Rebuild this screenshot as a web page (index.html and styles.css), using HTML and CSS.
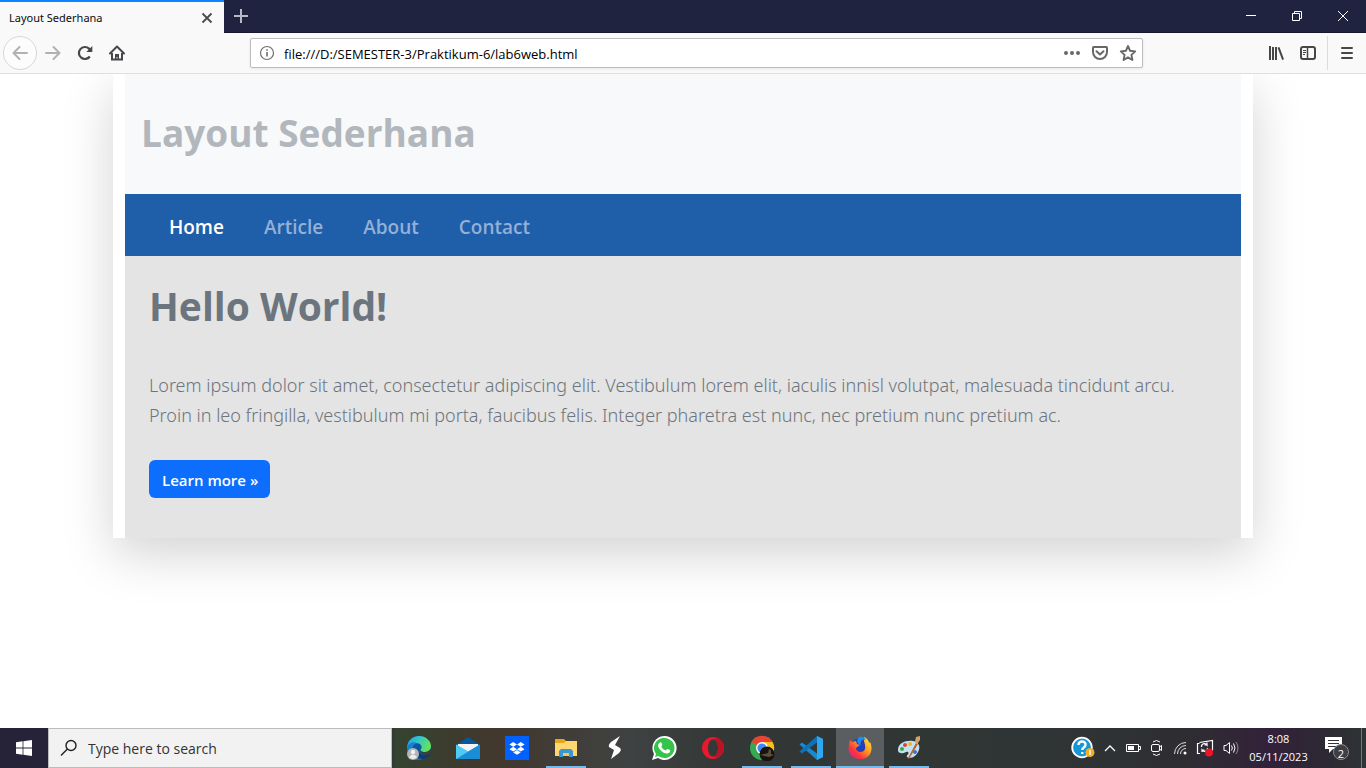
FILE: index.html
```html
<!DOCTYPE html>
<html lang="en">
<head>
<meta charset="utf-8">
<title>Layout Sederhana</title>
<link rel="stylesheet" href="styles.css">
</head>
<body>
<div class="tabs">
  <div class="tab"><span>Layout Sederhana</span>
    <button class="tab-close" aria-label="Close tab"><svg width="12" height="12" viewBox="0 0 12 12"><path d="M1.500 1.500l9 9m0-9l-9 9" stroke="#4a4a4c" stroke-width="1.800"/></svg></button>
  </div>
  <button class="tab-new" aria-label="New tab"><svg width="16" height="16" viewBox="0 0 16 16"><path d="M8 1v14M1 8h14" stroke="#b9b9c6" stroke-width="2"/></svg></button>
  <div class="window-buttons">
    <button aria-label="Minimize"><svg width="12" height="12" viewBox="0 0 12 12"><path d="M1 5.500h10" stroke="#fff"/></svg></button>
    <button aria-label="Restore"><svg width="12" height="12" viewBox="0 0 12 12" fill="none" stroke="#fff"><path d="M1.500 3.500h7v7h-7zM3.500 3.500v-2h7v7h-2"/></svg></button>
    <button aria-label="Close"><svg width="12" height="12" viewBox="0 0 12 12"><path d="M1 1l10 10M11 1L1 11" stroke="#fff"/></svg></button>
  </div>
</div>
<div class="toolbar">
  <div class="tools">
    <button class="back" aria-label="Back"><svg width="16" height="16" viewBox="0 0 16 16" fill="none" stroke="#b1b1b3" stroke-width="2" stroke-linecap="round" stroke-linejoin="round"><path d="M15 8H1.500M7.500 2l-6 6 6 6"/></svg></button>
    <button aria-label="Forward"><svg width="16" height="16" viewBox="0 0 16 16" fill="none" stroke="#b1b1b3" stroke-width="2" stroke-linecap="round" stroke-linejoin="round"><path d="M1 8h13.500M8.500 2l6 6-6 6"/></svg></button>
    <button aria-label="Reload"><svg width="16" height="16" viewBox="0 0 16 16" fill="none" stroke="#474749" stroke-width="2.200"><path d="M12.800 11.500A6 6 0 1 1 12 3.600L13.500 5"/><path d="M15.300 1v6h-6z" fill="#474749" stroke="none"/></svg></button>
    <button aria-label="Home"><svg width="16" height="16" viewBox="0 0 16 16" fill="none" stroke="#474749" stroke-width="2"><path d="M1 8.500L8 1.500l7 7" stroke-linecap="round" stroke-linejoin="round"/><path d="M3 8v6.500h10V8"/><path d="M6 15V9h4v6H8.500v-3h-1v3z" fill="#474749" stroke="none"/></svg></button>
  </div>
  <div class="address">
    <svg width="16" height="16" viewBox="0 0 16 16"><circle cx="8" cy="8" r="6.500" fill="none" stroke="#6f6f71" stroke-width="1.200"/><path d="M7.200 7h1.600v4.500H7.200zM7.200 4.200h1.600v1.600H7.200z" fill="#6f6f71"/></svg>
    <input aria-label="Address" value="file:///D:/SEMESTER-3/Praktikum-6/lab6web.html">
    <button aria-label="Page actions"><svg width="18" height="16" viewBox="0 0 18 16" fill="#68686a"><circle cx="3" cy="8" r="2"/><circle cx="9" cy="8" r="2"/><circle cx="15" cy="8" r="2"/></svg></button>
    <button aria-label="Save to Pocket"><svg width="18" height="16" viewBox="0 0 18 16" fill="none" stroke="#68686a" stroke-width="2" stroke-linecap="round" stroke-linejoin="round"><path d="M2.500 2h13Q16 2 16 3v4a7 7 0 0 1-14 0V3Q2 2 2.500 2zM5.500 6.200L9 9.500l3.500-3.300"/></svg></button>
    <button aria-label="Bookmark"><svg width="18" height="18" viewBox="0 0 18 18" fill="none" stroke="#68686a" stroke-width="1.900" stroke-linejoin="round"><path d="M9 2l2.100 4.800 5.100.6-3.800 3.500 1 5.100L9 13.400 4.600 16l1-5.100-3.800-3.500 5.100-.6z"/></svg></button>
  </div>
  <div class="tools-end">
    <button aria-label="Library"><svg width="16" height="16" viewBox="0 0 16 16" fill="none" stroke="#474749" stroke-width="2"><path d="M2 1v14M5 2v13M8 2v13M10.500 2.300l4.600 12.400"/></svg></button>
    <button aria-label="Sidebar"><svg width="18" height="16" viewBox="0 0 18 16" fill="none" stroke="#474749"><rect x="2" y="2" width="14" height="12" rx="2" stroke-width="2"/><path d="M8.500 2v12" stroke-width="1.500"/><path d="M4 5.500h3M4 7.500h3M4 9.500h2"/></svg></button>
    <button class="menu" aria-label="Menu"><svg width="12" height="14" viewBox="0 0 12 14" stroke="#474749" stroke-width="2" stroke-linecap="round"><path d="M1 2h10M1 7h10M1 12h10"/></svg></button>
  </div>
</div>
<div class="viewport">
  <div class="container">
    <header class="site-header"><h1>Layout Sederhana</h1></header>
    <nav class="site-nav"><a class="active" href="#">Home</a><a href="#">Article</a><a href="#">About</a><a href="#">Contact</a></nav>
    <main class="hero">
      <h2>Hello World!</h2>
      <p>Lorem ipsum dolor sit amet, consectetur adipiscing elit. Vestibulum lorem elit, iaculis innisl volutpat, malesuada tincidunt arcu. Proin in leo fringilla, vestibulum mi porta, faucibus felis. Integer pharetra est nunc, nec pretium nunc pretium ac.</p>
      <a class="btn" href="#">Learn more »</a>
    </main>
  </div>
</div>
<div class="taskbar">
  <button class="start" aria-label="Start"><svg width="16" height="16" viewBox="0 0 16 16" fill="#fff"><path d="M0 2.200l6.600-.9v6.200H0zM7.400 1.200L16 0v7.500H7.400zM0 8.400h6.600v6.300L0 13.800zM7.400 8.400H16V16l-8.600-1.200z"/></svg></button>
  <label class="search"><svg width="18" height="18" viewBox="0 0 18 18" fill="none" stroke="#222" stroke-width="1.400"><circle cx="11" cy="6.500" r="5"/><path d="M7.400 10.100L1 16.500"/></svg><input aria-label="Search" placeholder="Type here to search"></label>
  <div class="apps">
    <button aria-label="Edge"><svg width="26" height="26" viewBox="0 0 26 26"><defs><linearGradient id="e1" x1="0" y1="0" x2="1" y2=".3"><stop offset="0" stop-color="#249fd8"/><stop offset=".5" stop-color="#30c7cb"/><stop offset="1" stop-color="#65e05d"/></linearGradient></defs><circle cx="13" cy="13" r="12" fill="#0d579d"/><path d="M1 14C1 6 6 1 13 1s12 5 12 10c0 4-3 6-6 6-4 0-5-1-4-3 2-3-1-6-5-6s-8 3-9 6z" fill="url(#e1)"/><path d="M1 13c1-5 6-7 10-5-4 1-6 6-4 10 1 3 4 6 8 7C7 26 1 20 1 13z" fill="#187fd4"/><path d="M13 12c-3 4 1 9 8 8l4-2c-1 3-4 5-7 6-6 0-10-7-5-12z" fill="#103b70"/><path d="M15 14c-1 2 0 3 4 3 2 0 4-1 5.500-3l1 3.500-5 2.500c-5 0-7-3-5.500-6z" fill="#3b4039"/><circle cx="7" cy="19" r="6" fill="#b6b6b6"/><circle cx="7" cy="17" r="2.200" fill="#f2f2f2"/><path d="M3 22q4-5 8 0-4 4-8 0z" fill="#eee"/></svg></button>
    <button aria-label="Mail"><svg width="26" height="26" viewBox="0 0 26 26"><path d="M1 10L13 2l12 8v3H1z" fill="#07579f"/><path d="M3 9h20v9H3z" fill="#f4f4f4"/><path d="M1 9.500l12 7 12-7V24H1z" fill="#35b7ed"/><path d="M1 24L25 9.500V24z" fill="#198ed7"/><path d="M1 9.500l12 7L1 24z" fill="#4fcaf4"/></svg></button>
    <button aria-label="Dropbox"><svg width="26" height="26" viewBox="0 0 26 26"><path fill="#0061fe" d="M1 1h24v24H1z"/><path fill="#fff" d="M9.200 7l3.800 2.400-3.800 2.400-3.800-2.400zM16.800 7l3.800 2.400-3.800 2.400L13 9.400zM9.200 11.800l3.800 2.400-3.800 2.400-3.800-2.400zM16.800 11.800l3.800 2.400-3.800 2.400-3.800-2.400zM13 15.100l3.800 2.400L13 19.800l-3.800-2.300z"/></svg></button>
    <button class="open" aria-label="File Explorer"><svg width="26" height="26" viewBox="0 0 26 26"><path d="M2 4h9l2 2h11v15H2z" fill="#e7a51b"/><path d="M2 8h9l2-2h11v15H2z" fill="#ffd76e"/><path d="M6 22v-6l2-2h10l2 2v6h-4v-4h-6v4z" fill="#3997d5"/><path d="M10 18h6v3h-6z" fill="#f8c755"/></svg></button>
    <button aria-label="Shortcut app"><svg width="26" height="26" viewBox="0 0 26 26"><path d="M18 1L9 7q-3 3-2 5l5 3-3 9 8-6q3-3 1-5l-5-3z" fill="#fff"/></svg></button>
    <button aria-label="WhatsApp"><svg width="26" height="26" viewBox="0 0 26 26"><path d="M13 1a12 12 0 0 0-10 18L1 25l6-2A12 12 0 1 0 13 1z" fill="#fff"/><path d="M13 3a10 10 0 0 0-8 16l-1 3 3.500-1A10 10 0 1 0 13 3z" fill="#36c34a"/><path d="M9 7.500c1-.5 1.400 0 2.200 2.300.2.700-.5 1.300-1 1.800 1 2 2.500 3.200 4.500 4l1.500-1.700c.5-.2 2.700 1 3 1.400.2 3-2.400 3.500-4 3.200C11 17.500 8 14 7.200 11.200c-.3-1.400.5-3 1.800-3.700z" fill="#fff"/></svg></button>
    <button aria-label="Opera"><svg width="26" height="26" viewBox="0 0 26 26"><path fill-rule="evenodd" d="M13 2a11 11 0 1 0 0 22 11 11 0 1 0 0-22zm0 2.500c3 0 5 3.700 5 8.500s-2 8.500-5 8.500-5-3.700-5-8.500 2-8.500 5-8.500z" fill="#e8192c"/><path d="M13 4.500c6-3 11 2 11 8.500s-5 11.500-11 8.500c3 0 5-3.700 5-8.500s-2-8.500-5-8.500z" fill="#b71525"/></svg></button>
    <button class="open" aria-label="Chrome"><svg width="26" height="26" viewBox="0 0 26 26"><circle cx="13" cy="13" r="12" fill="#38a852"/><path d="M13 13L2.500 7A12 12 0 0 1 23.500 7z" fill="#e94335"/><path d="M13 7h10.500A12 12 0 0 1 13 25l5-9z" fill="#fbc116"/><circle cx="13" cy="13" r="6" fill="#fff"/><circle cx="13" cy="13" r="4.600" fill="#4285f4"/><circle cx="18" cy="19" r="7.500" fill="#15140f"/><path d="M11 20l8-2 1-4 2 1v4l3 1-5 2z" fill="#5c5036"/></svg></button>
    <button class="open" aria-label="Visual Studio Code"><svg width="26" height="26" viewBox="0 0 26 26"><path d="M19 1l6 3v18l-6 3L1.500 9.500 4 7.500l15 11z" fill="#168bd5"/><path d="M1.500 16.500L19 1v6.500L4 18.500z" fill="#0c73b9"/><path d="M19 1l6 3v18l-6 3z" fill="#30a6ed"/></svg></button>
    <button class="open current" aria-label="Firefox"><svg width="26" height="26" viewBox="0 0 26 26"><defs><linearGradient id="f1" x1="1" y1="0" x2="0" y2="1"><stop stop-color="#fff044"/><stop offset=".4" stop-color="#ff9b20"/><stop offset=".7" stop-color="#fb343e"/><stop offset="1" stop-color="#db159b"/></linearGradient></defs><circle cx="13" cy="12" r="9" fill="#253cbd"/><path d="M3 5l2 2 4-1 1 3 3 1-4 3c0 5 8 5 9 1 1-5-2-7-1-12 3 1 5 4 5 6l1-1c4 8 0 17-9 17C5 24 0 18 2 10z" fill="url(#f1)"/><path d="M12 2c3-1 6 0 7 3-5-1-6 2-5 5-4-1-5-5-2-8z" fill="#1690ee"/></svg></button>
    <button class="open" aria-label="Paint"><svg width="26" height="26" viewBox="0 0 26 26"><path d="M2 15C2 8 10 5 17 6c6 1 8 6 5 11-3 6-9 7-11 5-1-2 3-3 1-5-2-1-4 2-7 1-2 0-3-1-3-3z" fill="#c4e1f2"/><circle cx="6" cy="14" r="2" fill="#41a554"/><circle cx="9" cy="10" r="2" fill="#df4433"/><circle cx="14" cy="9" r="2" fill="#eab52b"/><circle cx="19" cy="17" r="2" fill="#3875cf"/><path d="M20 8l2 1-9 15-1-1z" fill="#bc6428"/><path d="M19 7l1-5 4-1v4l-3 4z" fill="#d6a36a"/></svg></button>
  </div>
  <div class="tray">
    <button aria-label="Help"><svg width="24" height="24" viewBox="0 0 24 24"><circle cx="11" cy="11.500" r="9.800" fill="#1597d6" stroke="#fff" stroke-width="1.800"/><path d="M7.500 9c0-5 7.500-4.500 7 0-.3 2.600-3.300 2.500-3.300 5M11.200 16v2" fill="none" stroke="#fff" stroke-width="2.400"/><circle cx="19" cy="16.500" r="4.500" fill="#f5ad24"/><path d="M19 14v5" stroke="#fff" stroke-width="1.500"/></svg></button>
    <button aria-label="Show hidden icons"><svg width="12" height="8" viewBox="0 0 12 8"><path d="M1 7l5-5 5 5" fill="none" stroke="#fff" stroke-width="1.300"/></svg></button>
    <button aria-label="Battery"><svg width="16" height="10" viewBox="0 0 16 10"><path d="M1.500 1.500h12v7h-12zM14 3.500h1.500v3H14" fill="none" stroke="#fff"/><path d="M3 3h6v4H3z" fill="#fff"/></svg></button>
    <button aria-label="Meet now"><svg width="14" height="18" viewBox="0 0 14 18" fill="none" stroke="#fff"><rect x="1.500" y="5.500" width="8" height="7" rx="1.500"/><path d="M9.500 8l2-1.500v5l-2-1.500M3 3q3.500-3 7 0M3 15q3.500 3 7 0"/></svg></button>
    <button aria-label="Network"><svg width="14" height="14" viewBox="0 0 14 14" fill="none" stroke="#ddd"><path d="M1.500 13A11.500 11.500 0 0 1 13 1.500M4.500 13A8.500 8.500 0 0 1 13 4.500M7.500 13A5.500 5.500 0 0 1 13 7.500"/><circle cx="12" cy="12" r="1.500" fill="#fff" stroke="none"/></svg></button>
    <button aria-label="Update"><svg width="18" height="18" viewBox="0 0 18 18" fill="none" stroke="#fff"><path d="M3.500 3.500L16.500 1.500v10M4 14.500H1.500v-10h2M5.500 8a3 3 0 0 1 5.500-2V3.500M11 6H8.500M11.500 9A3 3 0 0 1 6 11v2M6 11h2.500" stroke-width="1.200"/><circle cx="13" cy="13.500" r="4" fill="#ef1326" stroke="none"/></svg></button>
    <button aria-label="Volume"><svg width="16" height="14" viewBox="0 0 16 14" fill="none" stroke="#fff"><path d="M1 4.500h2l3.500-3v11l-3.500-3H1zM8.500 4.500q1.700 2.500 0 5M10.500 2.500q3 4.500 0 9"/><path d="M13 1q4 6 0 12" stroke="#888"/></svg></button>
  </div>
  <div class="clock"><span>8:08</span><span>05/11/2023</span></div>
  <button class="notes" aria-label="2 notifications"><svg width="26" height="26" viewBox="0 0 26 26"><path d="M1 2h17v12H9l-4 4v-4H1z" fill="#fff"/><path d="M4 5.500h11M4 8.500h11M4 11.500h8" stroke="#33333b"/><circle cx="17" cy="17" r="7.500" fill="#3d3d42" stroke="#8b8b90"/></svg><span>2</span></button>
  <button class="show-desktop" aria-label="Show desktop"></button>
</div>
</body>
</html>
```
FILE: styles.css
```css
* { box-sizing: border-box; }
body {
  margin: 0;
  min-height: 100vh;
  display: flex;
  flex-direction: column;
  background: #fff;
  font-family: "Open Sans", "Noto Sans", sans-serif;
}
button { border: 0; padding: 0; background: none; font: inherit; color: inherit; display: flex; align-items: center; justify-content: center; }
input { border: 0; outline: 0; padding: 0; background: none; font: inherit; min-width: 0; flex: 1; }
svg { flex: none; display: block; }

.tabs { display: flex; height: 33px; background: #202340; border-bottom: 1px solid #15172b; }
.tab {
  width: 224px;
  height: 33px;
  padding: 0 8px 0 9px;
  display: flex;
  align-items: center;
  justify-content: space-between;
  background: #f9f9fa;
  border-top: 2px solid #0a84ff;
  font-family: "Noto Sans", sans-serif;
  font-size: 11px;
  color: #0c0c0d;
}
.tab-close { width: 18px; height: 28px; }
.tab-new { width: 34px; }
.window-buttons { display: flex; margin-left: auto; }
.window-buttons button { width: 46px; }

.toolbar {
  display: flex;
  align-items: center;
  height: 41px;
  background: #f9f9fa;
  border-bottom: 1px solid #e0e0e1;
}
.tools { display: flex; width: 250px; padding-left: 3px; align-items: center; }
.tools button { width: 32px; height: 34px; }
.tools .back { width: 34px; border: 1px solid #d7d7d9; border-radius: 50%; background: #fcfcfc; }
.address {
  flex: 1;
  height: 30px;
  padding: 0 5px 0 8px;
  display: flex;
  align-items: center;
  gap: 9px;
  background: #fff;
  border: 1px solid #bdbdbf;
  border-radius: 2px;
  box-shadow: 0 1px 3px rgba(0, 0, 0, .08);
  font-size: 13px;
  color: #0c0c0d;
}
.address input { padding-top: 2px; }
.address button { width: 19px; height: 28px; }
.tools-end { display: flex; align-items: center; width: 223px; justify-content: flex-end; }
.tools-end button { width: 32px; height: 34px; }
.tools-end .menu { width: 39px; margin-left: 3px; border-left: 1px solid #dcdcde; }

.viewport { flex: 1; padding: 0 24px; overflow: hidden; }
.container {
  max-width: 1140px;
  margin: 0 auto;
  padding: 0 12px;
  background: #fff;
  box-shadow: 0 16px 48px rgba(0, 0, 0, .175);
}
.site-header { padding: 35px 16px 37px; background: #f8f9fa; }
h1, h2 { margin: 0; line-height: 48px; font-weight: 700; }
h1 { font-size: 37px; color: #b1b7bc; }
.site-nav { display: flex; gap: 40px; padding: 18px 44px 14px; background: #1f5faa; }
.site-nav a { font-size: 19px; line-height: 30px; font-weight: 600; color: #93b0d8; text-decoration: none; }
.site-nav .active { color: #fff; }
.hero { padding: 26px 24px 40px; background: #e4e4e4; }
.hero h2 { font-size: 39px; color: #6c757d; }
.hero p { margin: 40px 0 30px; font-family: "Noto Sans", sans-serif; font-size: 18px; line-height: 30px; font-weight: 300; color: #6c757d; }
.btn {
  display: inline-block;
  padding: 8px 12px 6px 13px;
  border-radius: 6px;
  background: #0d6efd;
  font-size: 15px;
  line-height: 24px;
  font-weight: 600;
  color: #fff;
  text-decoration: none;
  vertical-align: top;
}

.taskbar {
  display: flex;
  height: 40px;
  background: linear-gradient(90deg, #262237 0, #262237 28%, #354331 29%, #42372c 36%, #3f4242 46%, #333735 53%, #303634 70%, #2f3334 80%, #2e2d32 87%, #33213a 93%, #2c2833 97%, #2f3435 100%);
  color: #fff;
}
.start { width: 48px; }
.search {
  width: 344px;
  padding: 0 11px;
  display: flex;
  align-items: center;
  gap: 10px;
  background: #f2f2f2;
  border: 1px solid #bcbcbc;
  font-size: 14px;
}
.search input::placeholder { color: #333; opacity: 1; }
.apps { display: flex; gap: 1px; padding-left: 3px; }
.apps button { width: 48px; position: relative; }
.apps .open::after { content: ""; position: absolute; left: 4px; right: 4px; bottom: 0; height: 2px; background: #76b9ed; }
.apps .current { background: #5b5e60; }
.apps .current::after { left: 0; right: 0; }
.tray { display: flex; align-items: center; gap: 9px; margin-left: auto; }
.clock {
  width: 79px;
  display: flex;
  flex-direction: column;
  align-items: center;
  justify-content: center;
  font-size: 11px;
  line-height: 18px;
}
.notes { width: 43px; padding-left: 6px; position: relative; justify-content: flex-start; }
.notes span { position: absolute; left: 17px; top: 17px; width: 12px; font-size: 11px; line-height: 18px; text-align: center; }
.show-desktop { width: 5px; border-left: 1px solid #77787b; }
```
